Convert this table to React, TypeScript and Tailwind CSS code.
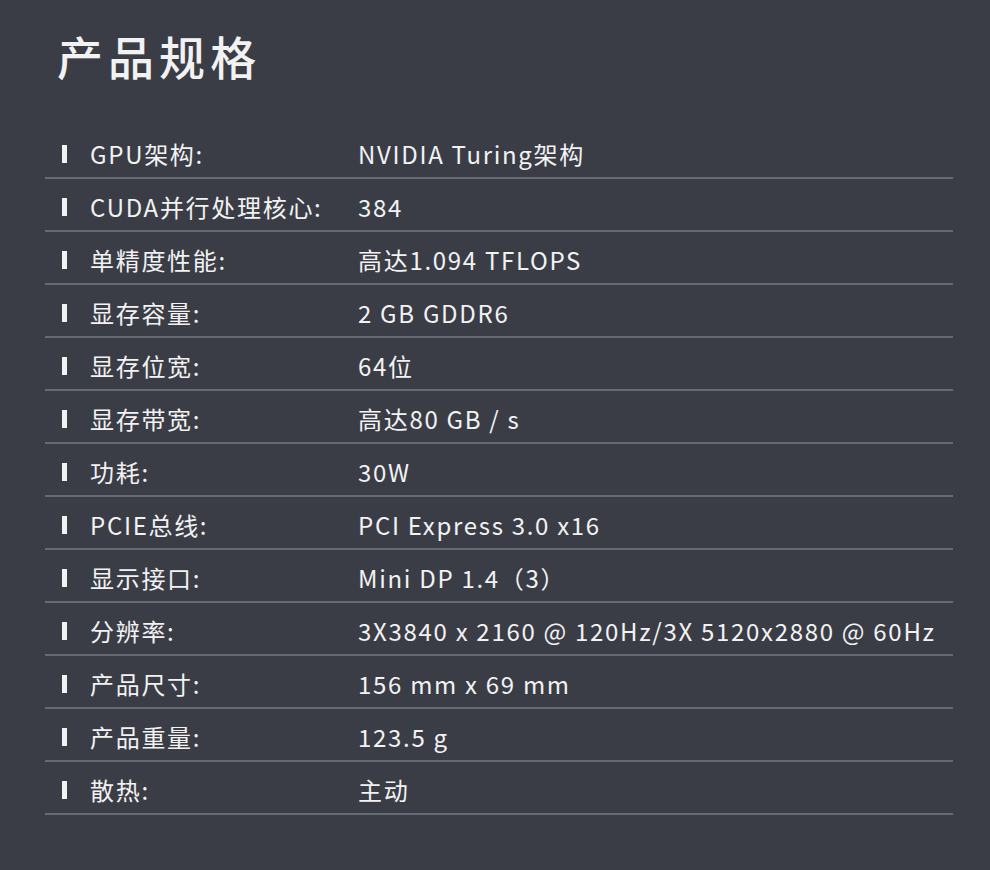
const specs: [string, string][] = [
  ["GPU架构:", "NVIDIA Turing架构"],
  ["CUDA并行处理核心:", "384"],
  ["单精度性能:", "高达1.094 TFLOPS"],
  ["显存容量:", "2 GB GDDR6"],
  ["显存位宽:", "64位"],
  ["显存带宽:", "高达80 GB / s"],
  ["功耗:", "30W"],
  ["PCIE总线:", "PCI Express 3.0 x16"],
  ["显示接口:", "Mini DP 1.4（3）"],
  ["分辨率:", "3X3840 x 2160 @ 120Hz/3X 5120x2880 @ 60Hz"],
  ["产品尺寸:", "156 mm x 69 mm"],
  ["产品重量:", "123.5 g"],
  ["散热:", "主动"],
]

export default function App() {
  return (
    <div
      className="w-[990px] h-[870px] bg-[#3a3d46] text-[#f2f2f2] pl-[45px] pr-[37px] pt-[25px]"
      style={{ fontFamily: '"Noto Sans CJK SC", "Noto Sans", sans-serif' }}
    >
      <h1 className="text-[46px] leading-[60px] font-medium tracking-[0.11em] pl-[12px]">
        产品规格
      </h1>
      <div className="mt-[41px]">
        {specs.map(([label, value]) => (
          <div
            key={label}
            className="flex items-center h-[53px] pt-[4px] border-b-2 border-[#676a73] text-[24px] leading-[30px] tracking-[1.7px]"
          >
            <div className="w-[5px] h-[18px] bg-[#f2f2f2] ml-[17px] mr-[23px]" />
            <div className="w-[268px] whitespace-nowrap">{label}</div>
            <div className="whitespace-nowrap">{value}</div>
          </div>
        ))}
      </div>
    </div>
  )
}
